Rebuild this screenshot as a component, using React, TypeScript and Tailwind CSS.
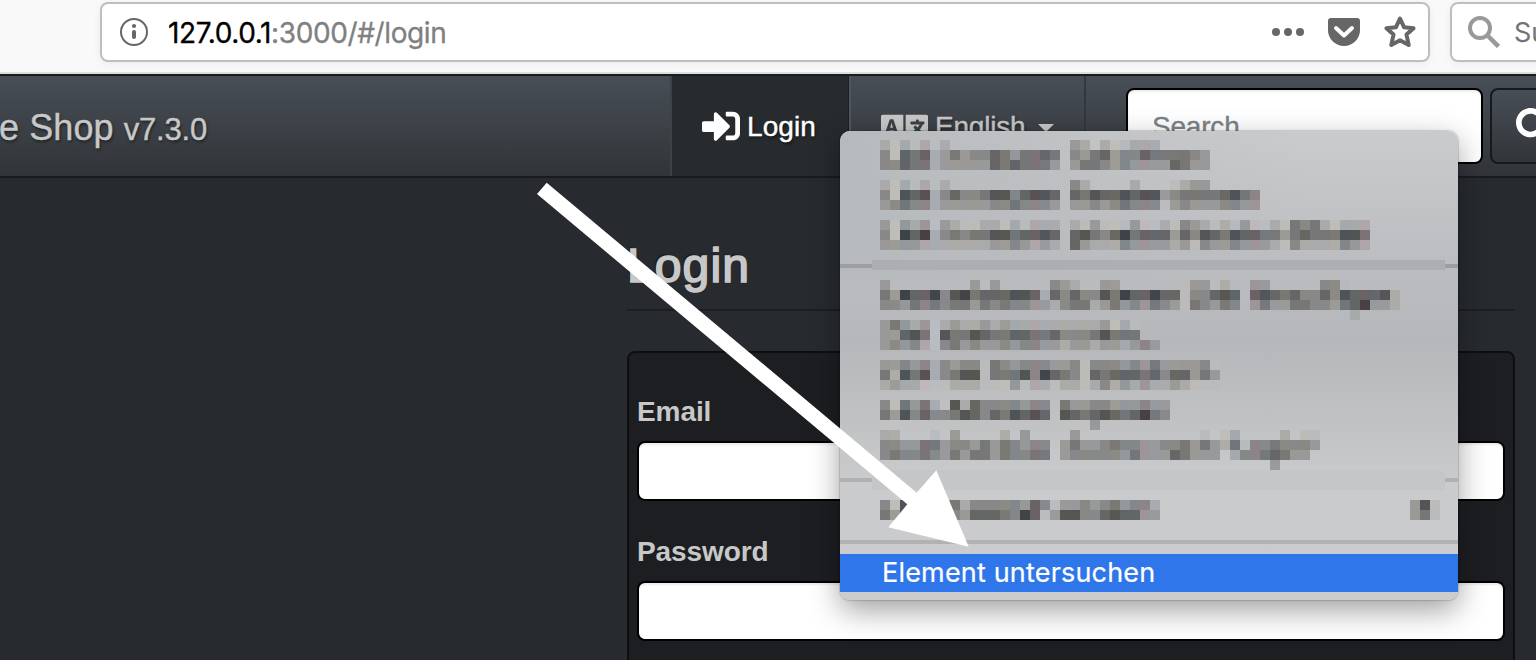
import React from "react";
import { FaSignInAlt, FaLanguage, FaSearch } from "react-icons/fa";

const CELL = 10;
const ROWS: [number, string][] = [
  [140, "ababa.a............9a.abbaaa"],
  [150, "8b676a979886797767.89769886777789"],
  [160, "88677a999996767779.97789899996799"],
  [180, "ababa.a............8a....a...ba99"],
  [190, "8b565a868875586556.6756656559877776578"],
  [200, "98788a999998878889.9989878" + "88b989998899"],
  [220, "9b9a9b9abbaababaaa.ab9bbb9bbab89abab9bbab787abaaa"],
  [230, "8b464a878775576656.657864766696856756677976777557"],
  [240, "9999aaaaaaa9989a9a.69aaa89999a9b8998999ab8aaaa89a"],
  [280, "9........9.9.....89a..99......b99.ab.99.....88b"],
  [290, "7946648547666556a6868857466466b88656.65676886856665a"],
  [300, "88978787797878899a877a97989789b78978.97997788976499a"],
  [310, "..............................................ba"],
  [320, "979a9ba9aa9a9aaaaaaaaa9bab"],
  [330, "99657b57756776677688875777"],
  [340, "9898ab879899898899a99a99a989"],
  [360, "99898a8988b789888998b888989799998b"],
  [370, "7a575a8755b777584678b6766676866979"],
  [380, "a9aabbbaaabbb9baabaaba8a9a9aa9abbb"],
  [400, "8b797a.5a68888988.79988999899"],
  [410, "79586887568675656.56765676478"],
  [420, ".....................9"],
  [430, "aa...b.9....a.9....9............b.ba....a.bb"],
  [440, "88997798897978988.9799878899887979a7b8878889"],
  [450, "87887897977978877.9888889799967999.a8876799"],
  [460, ".......................................9"],
  [500, "8b589697a88888968b998987988a.........................95b"],
  [510, "7959768896667846b95588656699.........................97b"],
];
const TINTS = [
  [1, 0, 0], [4, 2, -3], [-6, -1, 3], [-3, 0, 0], [4, -4, -1], [-2, 1, 5], [1, 0, 2], [1, 1, -3], [0, 0, 1], [2, 0, -3], [-1, 0, 2],
];

function Mosaic() {
  const cells: React.ReactNode[] = [];
  ROWS.forEach(([y, row]) => {
    row.split("").forEach((c, i) => {
      if (c === ".") return;
      const v = parseInt(c, 16) * 17;
      const t = TINTS[i % TINTS.length];
      cells.push(
        <rect key={y + "-" + i} x={i * CELL + 40} y={y - 131} width={CELL} height={CELL} fill={`rgb(${v + t[0]},${v + t[1]},${v + t[2]})`} />
      );
    });
  });
  return (
    <svg width="618" height="470" className="absolute left-0 top-0" shapeRendering="crispEdges">
      <rect x="0" y="133" width="618" height="4" fill="#9d9ea2" />
      <rect x="32" y="129" width="573" height="10" fill="#adaeb1" />
      <rect x="0" y="347" width="618" height="4" fill="#b0b1b3" />
      <rect x="32" y="339" width="573" height="20" fill="#c5c6c8" />
      <rect x="0" y="409" width="618" height="4" fill="#b1b2b4" />
      {cells}
    </svg>
  );
}

function UrlBar() {
  return (
    <header className="flex h-[74px] w-full items-start border-b-2 border-[#dfdfdf] bg-[#f9f9fa] pl-[100px] pt-[2px]">
      <div className="flex h-[60px] w-[1330px] shrink-0 items-center rounded-[8px] border-2 border-[#bebebe] bg-white pl-[18px] pr-[12px] shadow-[0_2px_8px_rgba(0,0,0,0.06)]">
        <svg width="28" height="28" viewBox="0 0 28 28">
          <circle cx="14" cy="14" r="13" fill="none" stroke="#666" strokeWidth="2" />
          <circle cx="14" cy="8" r="2.1" fill="#666" />
          <rect x="12" y="12" width="4" height="9" rx="2" fill="#666" />
        </svg>
        <div className="ml-[20px] flex-1 whitespace-nowrap pt-[2px] font-['Inter',sans-serif] text-[28px] leading-[34px] tracking-[-0.38px] text-[#808080] [-webkit-text-stroke:0.3px_currentColor]">
          <span className="text-black">127.0.0.1</span>:3000/#/login
        </div>
        <svg width="32" height="8" viewBox="0 0 32 8" fill="#666">
          <circle cx="4" cy="4" r="4" />
          <circle cx="16" cy="4" r="4" />
          <circle cx="28" cy="4" r="4" />
        </svg>
        <svg width="32" height="28" viewBox="0 0 32 28" className="ml-[24px]">
          <path d="M3 0H29Q32 0 32 3V12A16 16 0 0 1 0 12V3Q0 0 3 0Z" fill="#666" />
          <path d="M8 10L16 17.500L24 10" fill="none" stroke="#fff" strokeWidth="4" strokeLinecap="round" strokeLinejoin="round" />
        </svg>
        <svg width="32" height="32" viewBox="0 0 32 32" className="ml-[24px]">
          <path d="M16 2.500L20 11.200L29.500 12.200L22.500 18.600L24.700 29L16 24.300L7.300 29L9.500 18.600L2.500 12.200L12 11.200Z" fill="none" stroke="#666" strokeWidth="4" strokeLinejoin="round" />
        </svg>
      </div>
      <div className="ml-[20px] flex h-[60px] w-[300px] shrink-0 items-center rounded-[8px] border-2 border-[#bebebe] bg-white pl-[16px] shadow-[0_2px_8px_rgba(0,0,0,0.06)]">
        <svg width="32" height="32" viewBox="0 0 32 32" fill="none" stroke="#999" strokeWidth="4">
          <circle cx="12" cy="12" r="10" />
          <path d="M19 19L30.500 30.500" strokeWidth="4.500" />
        </svg>
        <span className="ml-[14px] pt-[2px] font-['Inter',sans-serif] text-[27px] leading-[34px] text-[#737373]">Suchen</span>
      </div>
    </header>
  );
}

function NavBar() {
  return (
    <nav className="flex h-[104px] w-full border-y-2 border-[#191b1d] bg-[linear-gradient(#484e57,#3a3f44_60%,#313439)] font-['Liberation_Sans',sans-serif]">
      <div className="flex w-[670px] shrink-0 items-baseline whitespace-nowrap pt-[30px] text-[36px] leading-[44px] text-[#c8c8c8] [-webkit-text-stroke:0.4px_currentColor] [text-shadow:1px_2px_3px_rgba(0,0,0,0.5)]">
        <span className="-ml-[1px] tracking-[0.1px]">e Shop</span>
        <span className="ml-[10px] text-[31px] tracking-[-0.2px]">v7.3.0</span>
      </div>
      <div className="flex w-[179px] shrink-0 items-center border-l-2 border-r border-l-[#3e4245] border-r-[#1f2124] bg-[#272b2e] pl-[30px] text-[28px] text-white [text-shadow:1px_2px_3px_rgba(0,0,0,0.5)]">
        <FaSignInAlt size={38} />
        <span className="ml-[7px] pt-[2px] tracking-[0.1px] [-webkit-text-stroke:0.4px_currentColor]">Login</span>
      </div>
      <div className="flex w-[237px] shrink-0 items-center border-l-2 border-r-2 border-l-[#505660] border-r-[#34383d] pl-[30px] text-[28px] text-[#c8c8c8] [text-shadow:1px_2px_3px_rgba(0,0,0,0.5)]">
        <FaLanguage size={47} />
        <span className="ml-[7px] pt-[2px] tracking-[-0.2px] [-webkit-text-stroke:0.4px_currentColor]">English</span>
        <span className="ml-[13px] mt-[3px] border-x-8 border-t-8 border-x-transparent border-t-[#c8c8c8]" />
      </div>
      <div className="ml-[40px] mt-[12px] flex h-[76px] w-[357px] shrink-0 items-center rounded-[8px] border-2 border-black bg-white pl-[24px] pt-[2px] text-[28px] tracking-[-0.2px] text-[#7a8288] shadow-[inset_0_2px_2px_rgba(0,0,0,0.08)] [-webkit-text-stroke:0.3px_currentColor]">
        Search
      </div>
      <div className="ml-[7px] mt-[12px] flex h-[76px] w-[90px] shrink-0 items-center rounded-[8px] border-2 border-[#17191b] bg-[linear-gradient(#484e57,#3a3f44_60%,#313439)] pl-[24px] text-white">
        <FaSearch size={36} />
      </div>
    </nav>
  );
}

function Field({ label }: { label: string }) {
  return (
    <label className="block h-[140px] pl-[8px] text-[28px] font-bold leading-[40px] tracking-[-0.08px] text-[#c8c8c8]">
      <span className="block h-[40px] pt-px">{label}</span>
      <span className="mt-[10px] block h-[60px] w-[868px] rounded-[8px] border-2 border-black bg-white shadow-[inset_0_2px_2px_rgba(0,0,0,0.08)]" />
    </label>
  );
}

function ContextMenu() {
  return (
    <div className="absolute left-[840px] top-[131px] flex h-[469px] w-[618px] flex-col justify-end overflow-visible rounded-[10px] bg-[linear-gradient(#cacbcd,#bcbdc0_28%,#b6b7ba_45%,#bebfc1_58%,#cacbcd_75%,#cccccd)] shadow-[0_0_1px_1px_rgba(0,0,0,0.15),0_10px_30px_rgba(0,0,0,0.38)]">
      <div className="absolute inset-x-0 top-0 h-[150px] rounded-t-[10px] bg-[linear-gradient(90deg,#b7babd,#b7babd00_75%)]" />
      <Mosaic />
      <div className="relative mb-[8px] flex h-[38px] items-center whitespace-nowrap bg-[#2e76ea] pl-[42px] font-['Inter',sans-serif] text-[27px] tracking-[0.18px] text-white [-webkit-text-stroke:0.2px_currentColor]">
        Element untersuchen
      </div>
    </div>
  );
}

export default function App() {
  return (
    <div className="relative h-[660px] w-[1536px] overflow-hidden bg-[#272b30] font-['Liberation_Sans',sans-serif]">
      <UrlBar />
      <NavBar />
      <main className="ml-[627px] w-[888px]">
        <h1 className="h-[133px] border-b-2 border-[#1c1e22] pt-[60px] text-[48px] leading-[56px] tracking-[1.1px] text-[#c8c8c8] [-webkit-text-stroke:1.7px_#c8c8c8] [text-shadow:-2px_-2px_0_rgba(0,0,0,0.3)]">
          Login
        </h1>
        <section className="mt-[40px] h-[330px] rounded-[8px] border-2 border-[#0d0e10] bg-[#1c1e22] pt-[38px]">
          <Field label="Email" />
          <Field label="Password" />
        </section>
      </main>
      <ContextMenu />
      <svg width="1536" height="660" className="pointer-events-none absolute left-0 top-0">
        <path d="M546.700 182.700L916.700 492.700L936.300 470.300L968.700 546.700L888.300 527.300L907.300 504.300L537 194Z" fill="#fff" />
      </svg>
    </div>
  );
}
